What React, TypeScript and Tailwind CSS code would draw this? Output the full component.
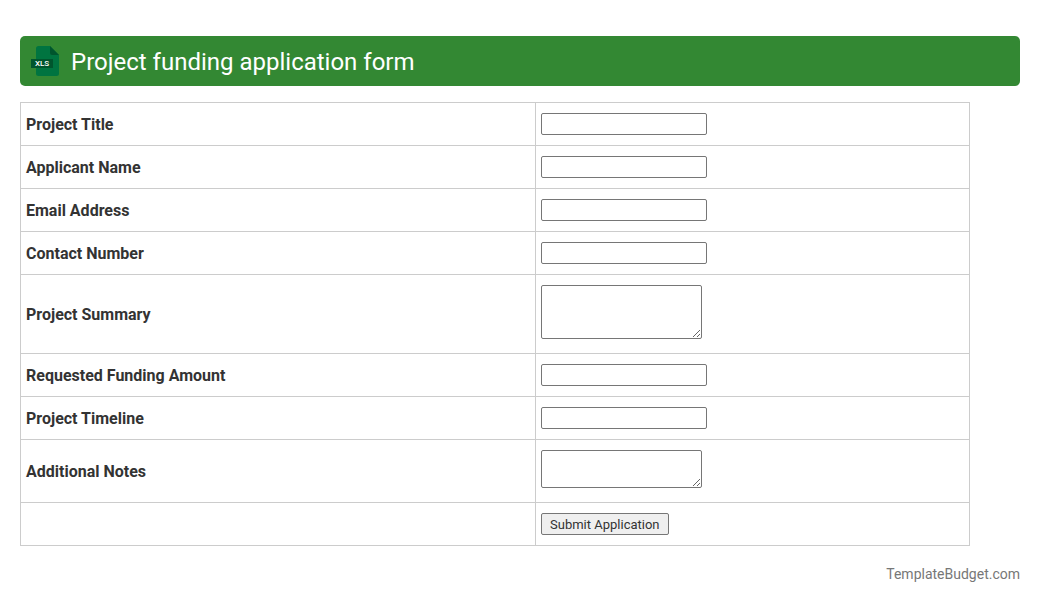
import React from "react";

type Field = { id: string; label: string; type?: string; rows?: number };

const fields: Field[] = [
  { id: "project-title", label: "Project Title", type: "text" },
  { id: "applicant-name", label: "Applicant Name", type: "text" },
  { id: "email", label: "Email Address", type: "email" },
  { id: "phone", label: "Contact Number", type: "tel" },
  { id: "summary", label: "Project Summary", rows: 3 },
  { id: "amount", label: "Requested Funding Amount", type: "text" },
  { id: "timeline", label: "Project Timeline", type: "text" },
  { id: "notes", label: "Additional Notes", rows: 2 },
];

function XlsIcon() {
  return (
    <svg width="30" height="30" viewBox="0 0 30 30" className="shrink-0" aria-hidden="true">
      <path d="M7.5 0H19l9 9v18.500a2.500 2.500 0 0 1-2.500 2.500h-18A2.500 2.500 0 0 1 5 27.500v-25A2.500 2.500 0 0 1 7.500 0z" fill="#007440" />
      <path d="M19 0l9 9h-7a2 2 0 0 1-2-2z" fill="#00552d" />
      <rect x="0" y="13" width="22" height="9" fill="#00552d" />
      <text
        x="11"
        y="20"
        textAnchor="middle"
        fill="#ffffff"
        fontSize="8"
        fontWeight="500"
        fontFamily="Roboto, sans-serif"
      >
        XLS
      </text>
    </svg>
  );
}

const cell = "border border-[#cccccc] px-[5px]";
const box = "block rounded-[2px] border border-[#767676] bg-white px-[2px] text-[13px]";

export default function App() {
  return (
    <main className="bg-white px-5 pt-9 font-[Roboto,sans-serif] text-[#333333]">
      <header className="flex h-[50px] items-center gap-2.5 rounded-[5px] bg-[#338833] px-[11px] text-white">
        <XlsIcon />
        <h1 className="pt-[2px] text-[24px] leading-8">Project funding application form</h1>
      </header>

      <form className="mt-4" onSubmit={(e) => e.preventDefault()}>
        <table className="w-[95%] border-collapse text-[16px] leading-[22px]">
          <tbody>
            {fields.map((f) => (
              <tr key={f.id}>
                <th scope="row" className={`${cell} w-[515px] pt-[11px] pb-[9px] text-left align-middle font-bold`}>
                  <label htmlFor={f.id}>{f.label}</label>
                </th>
                <td className={`${cell} pt-[10px] ${f.rows ? "pb-[14px]" : "pb-[10px]"}`}>
                  {f.rows ? (
                    <textarea
                      id={f.id}
                      name={f.id}
                      rows={f.rows}
                      className={`${box} w-[161px] resize py-[2px] leading-4`}
                    />
                  ) : (
                    <input id={f.id} name={f.id} type={f.type} className={`${box} h-[22px] w-[166px]`} />
                  )}
                </td>
              </tr>
            ))}
            <tr>
              <td className={cell} />
              <td className={`${cell} py-[10px]`}>
                <button
                  type="submit"
                  className="block h-[22px] rounded-[2px] border border-[#767676] bg-[#efefef] px-2 pt-px text-[13px] leading-5"
                >
                  Submit Application
                </button>
              </td>
            </tr>
          </tbody>
        </table>
      </form>

      <footer className="mt-[18px] text-right text-[14px] leading-5 text-[#777777]">TemplateBudget.com</footer>
    </main>
  );
}
